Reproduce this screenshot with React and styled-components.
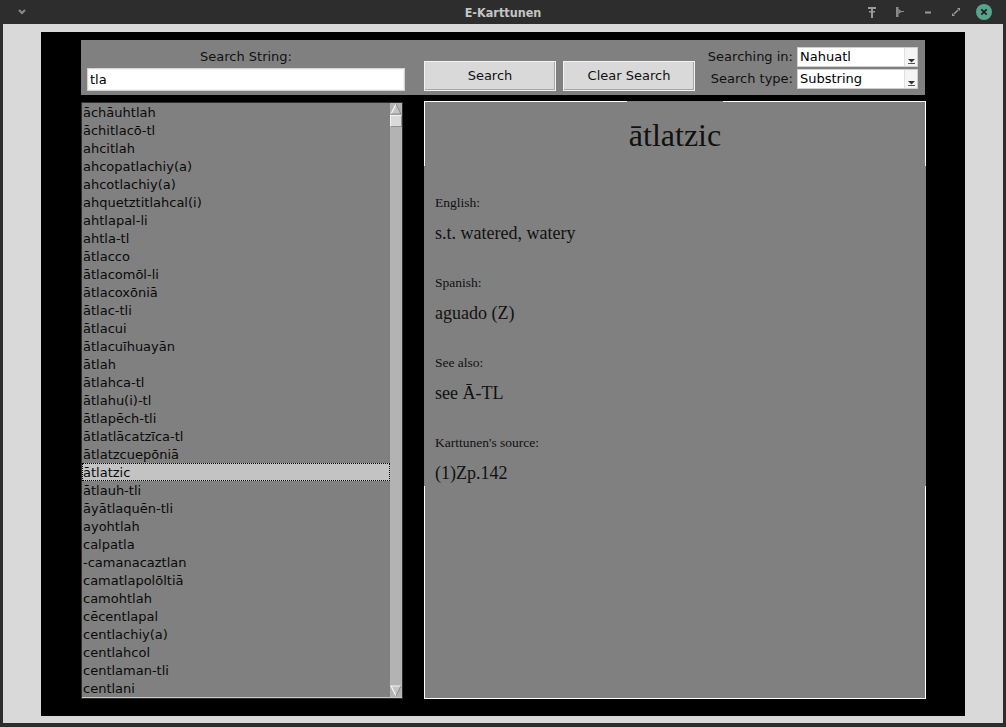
import React from "react";
import styled, { createGlobalStyle } from "styled-components";

const GlobalStyle = createGlobalStyle`
  html, body { margin: 0; padding: 0; background: #2d2d2d; }
  * { box-sizing: border-box; }
`;

const SANS = `"DejaVu Sans", "Liberation Sans", sans-serif`;
const SERIF = `"Liberation Serif", "Times New Roman", serif`;

const Window = styled.div`
  width: 1006px;
  height: 727px;
  display: flex;
  flex-direction: column;
  background: #2d2d2d;
  overflow: hidden;
`;

const TitleBar = styled.header`
  height: 24px;
  flex: none;
  display: grid;
  grid-template-columns: 1fr auto 1fr;
  align-items: center;
  padding: 0 14px;
`;

const TitleText = styled.div`
  color: #c4c4c4;
  font: bold 12.5px "DejaVu Sans Condensed", "DejaVu Sans", sans-serif;
`;

const TitleIcons = styled.div`
  display: flex;
  justify-content: ${(p) => (p.$right ? "flex-end" : "flex-start")};
  gap: 12px;
`;

const IconBox = styled.svg`
  width: 16px;
  height: 16px;
  display: block;
`;

const Frame = styled.div`
  flex: 1;
  margin: 0 3px 4px;
  background: #d9d9d9;
  padding: 8px 38px 7px;
  display: flex;
`;

const Stage = styled.main`
  flex: 1;
  background: #000;
  padding: 8px 39px 0 40px;
  display: flex;
  flex-direction: column;
`;

const TopBar = styled.section`
  width: 844px;
  height: 55px;
  background: #808080;
  display: flex;
  align-items: flex-end;
  padding: 0 7px 4px 6px;
  font: 13px ${SANS};
  color: #000;
`;

const SearchField = styled.div`
  width: 318px;
  display: flex;
  flex-direction: column;
  align-items: center;
  gap: 3px;
`;

const FieldLabel = styled.div`
  line-height: 17px;
  color: #111;
`;

const TextInput = styled.input`
  width: 318px;
  height: 23px;
  border: 1px solid #d4d4d4;
  box-shadow: inset 0 0 0 1px #f4f4f4;
  background: #fff;
  padding: 0 0 0 2px;
  font: 13px ${SANS};
  color: #000;
  outline: none;
`;

const Button = styled.button`
  width: 132px;
  height: 30px;
  margin-left: ${(p) => p.$gap}px;
  background: #d9d9d9;
  border: 1px solid #f2f2f2;
  box-shadow: inset -1px -1px 0 #a8a8a8;
  font: 13px ${SANS};
  color: #111;
  padding: 0 0 2px;
`;

const OptionsGrid = styled.div`
  margin-left: auto;
  margin-bottom: 2px;
  display: grid;
  grid-template-columns: auto 121px;
  column-gap: 4px;
  row-gap: 2px;
`;

const OptionLabel = styled.div`
  justify-self: end;
  line-height: 20px;
  color: #111;
`;

const Combo = styled.div`
  height: 20px;
  background: #fff;
  border: 1px solid #cfcfcf;
  display: flex;
  align-items: stretch;
`;

const ComboText = styled.div`
  flex: 1;
  padding-left: 2px;
  line-height: 18px;
  color: #000;
`;

const ComboArrow = styled.div`
  width: 13px;
  background: #f4f4f4;
  border-left: 1px solid #e0e0e0;
  display: flex;
  align-items: flex-end;
  justify-content: center;
  padding-bottom: 2px;
`;

const Main = styled.div`
  display: flex;
  gap: 21px;
  margin-top: 6px;
  align-items: flex-start;
`;

const ListFrame = styled.div`
  width: 322px;
  height: 597px;
  margin-top: 1px;
  border: 1px solid #2e2e2e;
  display: flex;
  background: #808080;
`;

const ListItems = styled.div`
  flex: 1;
  overflow: hidden;
  border-bottom: 1px solid #c9c9c9;
  font: 13px ${SANS};
  color: #0a0a0a;
`;

const ListRow = styled.div`
  height: 18px;
  line-height: 16px;
  padding: 2px 0 0 1px;
  white-space: nowrap;
  background: ${(p) => (p.$selected ? "#c3c3c3" : "transparent")};
  outline: ${(p) => (p.$selected ? "1px dotted #000" : "none")};
  outline-offset: -1px;
`;

const ScrollBar = styled.div`
  width: 12px;
  background: #b3b3b3;
  display: flex;
  flex-direction: column;
  border-bottom: 1px solid #c9c9c9;
`;

const ScrollArrow = styled.svg`
  width: 12px;
  height: 12px;
  display: block;
  flex: none;
`;

const Thumb = styled.div`
  height: 12px;
  background: #d9d9d9;
  border: 1px solid #f0f0f0;
  border-right-color: #909090;
  border-bottom-color: #909090;
`;

const Filler = styled.div`
  flex: 1;
`;

const Detail = styled.article`
  width: 502px;
  height: 598px;
  background: #808080;
  border: 1px solid #fff;
  border-top: none;
  display: flex;
  flex-direction: column;
  color: #111;
  font-family: ${SERIF};
`;

const TitleRow = styled.div`
  display: flex;
`;

const Edge = styled.div`
  flex: 1;
  border-top: 1px solid #fff;
`;

const Heading = styled.h1`
  margin: 0;
  padding: 14px 2px 11px;
  font: 32px ${SERIF};
  line-height: 40px;
  font-weight: normal;
  color: #111;
`;

const Entries = styled.section`
  margin: 0 -1px;
  padding: 29px 10px 1px 11px;
  background: #808080;
`;

const Entry = styled.div`
  & + & {
    margin-top: 30px;
  }
`;

const EntryLabel = styled.div`
  font-size: 13.5px;
  line-height: 16px;
`;

const EntryValue = styled.div`
  font-size: 18px;
  line-height: 24px;
  margin-top: 10px;
`;

const items = [
  "āchāuhtlah",
  "āchitlacō-tl",
  "ahcitlah",
  "ahcopatlachiy(a)",
  "ahcotlachiy(a)",
  "ahquetztitlahcal(i)",
  "ahtlapal-li",
  "ahtla-tl",
  "ātlacco",
  "ātlacomōl-li",
  "ātlacoxōniā",
  "ātlac-tli",
  "ātlacui",
  "ātlacuīhuayān",
  "ātlah",
  "ātlahca-tl",
  "ātlahu(i)-tl",
  "ātlapēch-tli",
  "ātlatlācatzīca-tl",
  "ātlatzcuepōniā",
  "ātlatzic",
  "ātlauh-tli",
  "āyātlaquēn-tli",
  "ayohtlah",
  "calpatla",
  "-camanacaztlan",
  "camatlapolōltiā",
  "camohtlah",
  "cēcentlapal",
  "centlachiy(a)",
  "centlahcol",
  "centlaman-tli",
  "centlani",
];

const entries = [
  ["English:", "s.t. watered, watery"],
  ["Spanish:", "aguado (Z)"],
  ["See also:", "see Ā-TL"],
  ["Karttunen's source:", "(1)Zp.142"],
];

function ArrowDown() {
  return (
    <svg width="9" height="6" viewBox="0 0 9 6">
      <path d="M1 1 L8 1 L4.5 4.5 Z" fill="#333" />
      <rect x="1" y="5" width="7" height="1" fill="#555" />
    </svg>
  );
}

export default function App() {
  return (
    <>
      <GlobalStyle />
      <Window>
        <TitleBar>
          <TitleIcons>
            <IconBox viewBox="0 0 16 16">
              <polyline points="5,6 8,9 11,6" fill="none" stroke="#8c8c8c" strokeWidth="2" />
            </IconBox>
          </TitleIcons>
          <TitleText>E-Karttunen</TitleText>
          <TitleIcons $right>
            <IconBox viewBox="0 0 16 16">
              <rect x="4" y="3" width="8" height="2" fill="#9a9a9a" />
              <rect x="5" y="7" width="6" height="1.5" fill="#9a9a9a" />
              <rect x="7" y="3" width="2" height="11" fill="#9a9a9a" />
            </IconBox>
            <IconBox viewBox="0 0 16 16">
              <rect x="4" y="3" width="2.5" height="10" fill="#8a8a8a" />
              <polygon points="6.5,5 10,7.5 6.5,10" fill="#8a8a8a" />
              <rect x="9" y="7" width="3" height="1" fill="#8a8a8a" />
            </IconBox>
            <IconBox viewBox="0 0 16 16">
              <rect x="5" y="7.5" width="6" height="2" fill="#9a9a9a" />
            </IconBox>
            <IconBox viewBox="0 0 16 16">
              <polygon points="9,4 12,4 12,7" fill="#9a9a9a" />
              <polygon points="4,9 4,12 7,12" fill="#9a9a9a" />
              <line x1="6" y1="10" x2="10" y2="6" stroke="#9a9a9a" strokeWidth="1.6" />
            </IconBox>
            <IconBox viewBox="0 0 16 16">
              <circle cx="8" cy="8" r="8" fill="#55a48c" />
              <path d="M5.3 5.3 L10.7 10.7 M10.7 5.3 L5.3 10.7" stroke="#222" strokeWidth="1.8" />
            </IconBox>
          </TitleIcons>
        </TitleBar>
        <Frame>
          <Stage>
            <TopBar>
              <SearchField>
                <FieldLabel>Search String:</FieldLabel>
                <TextInput defaultValue="tla" readOnly />
              </SearchField>
              <Button $gap={19}>Search</Button>
              <Button $gap={7}>Clear Search</Button>
              <OptionsGrid>
                <OptionLabel>Searching in:</OptionLabel>
                <Combo>
                  <ComboText>Nahuatl</ComboText>
                  <ComboArrow>
                    <ArrowDown />
                  </ComboArrow>
                </Combo>
                <OptionLabel>Search type:</OptionLabel>
                <Combo>
                  <ComboText>Substring</ComboText>
                  <ComboArrow>
                    <ArrowDown />
                  </ComboArrow>
                </Combo>
              </OptionsGrid>
            </TopBar>
            <Main>
              <ListFrame>
                <ListItems>
                  {items.map((it) => (
                    <ListRow key={it} $selected={it === "ātlatzic"}>
                      {it}
                    </ListRow>
                  ))}
                </ListItems>
                <ScrollBar>
                  <ScrollArrow viewBox="0 0 12 12">
                    <polygon points="6,1 11,11 1,11" fill="#c4c4c4" />
                    <polyline points="1,11 6,1" fill="none" stroke="#f4f4f4" strokeWidth="1.2" />
                    <polyline points="6,1 11,11 1,11" fill="none" stroke="#8a8a8a" strokeWidth="1" />
                  </ScrollArrow>
                  <Thumb />
                  <Filler />
                  <ScrollArrow viewBox="0 0 12 12">
                    <polygon points="1,1 11,1 6,11" fill="#c4c4c4" />
                    <polyline points="6,11 1,1 11,1" fill="none" stroke="#f4f4f4" strokeWidth="1.2" />
                    <polyline points="11,1 6,11" fill="none" stroke="#8a8a8a" strokeWidth="1" />
                  </ScrollArrow>
                </ScrollBar>
              </ListFrame>
              <Detail>
                <TitleRow>
                  <Edge />
                  <Heading>ātlatzic</Heading>
                  <Edge />
                </TitleRow>
                <Entries>
                  {entries.map(([label, value]) => (
                    <Entry key={label}>
                      <EntryLabel>{label}</EntryLabel>
                      <EntryValue>{value}</EntryValue>
                    </Entry>
                  ))}
                </Entries>
              </Detail>
            </Main>
          </Stage>
        </Frame>
      </Window>
    </>
  );
}
